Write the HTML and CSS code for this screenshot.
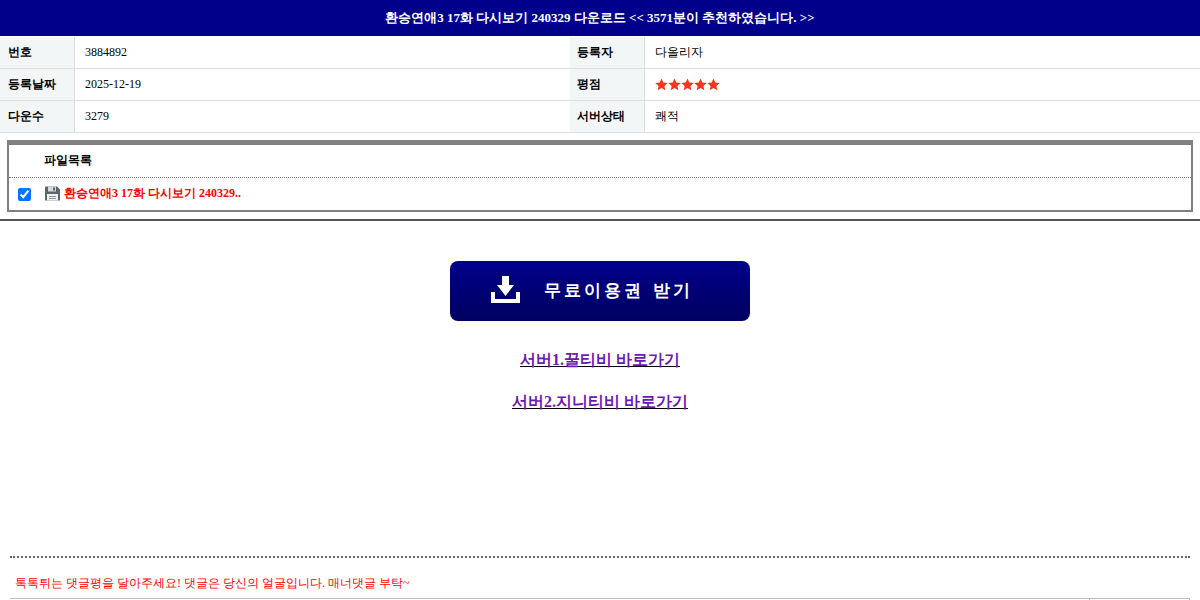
FILE: index.html
```html
<!DOCTYPE html>
<html>
<head>
    <meta charset="UTF-8">
    <meta name="viewport" content="width=device-width, initial-scale=1.0">
    <title>환승연애3 17화 다시보기 240329 다운로드</title>
    <link rel="stylesheet" href="styles.css">
</head>
<body>
    <div class="title-bar">환승연애3 17화 다시보기 240329 다운로드 &lt;&lt; 3571분이 추천하였습니다. &gt;&gt;</div>

    <table class="info-table">
        <tr>
            <th>번호</th>
            <td>3884892</td>
            <th>등록자</th>
            <td>다올리자</td>
        </tr>
        <tr>
            <th>등록날짜</th>
            <td>2025-12-19</td>
            <th>평점</th>
            <td>
                <div class="stars">
                    <svg viewBox="0 0 13 13"><path d="M6.5 0.5L8.3 4.5L12.7 5L9.4 7.9L10.3 12.3L6.5 10L2.7 12.3L3.6 7.9L0.3 5L4.7 4.5Z"/></svg>
                    <svg viewBox="0 0 13 13"><path d="M6.5 0.5L8.3 4.5L12.7 5L9.4 7.9L10.3 12.3L6.5 10L2.7 12.3L3.6 7.9L0.3 5L4.7 4.5Z"/></svg>
                    <svg viewBox="0 0 13 13"><path d="M6.5 0.5L8.3 4.5L12.7 5L9.4 7.9L10.3 12.3L6.5 10L2.7 12.3L3.6 7.9L0.3 5L4.7 4.5Z"/></svg>
                    <svg viewBox="0 0 13 13"><path d="M6.5 0.5L8.3 4.5L12.7 5L9.4 7.9L10.3 12.3L6.5 10L2.7 12.3L3.6 7.9L0.3 5L4.7 4.5Z"/></svg>
                    <svg viewBox="0 0 13 13"><path d="M6.5 0.5L8.3 4.5L12.7 5L9.4 7.9L10.3 12.3L6.5 10L2.7 12.3L3.6 7.9L0.3 5L4.7 4.5Z"/></svg>
                </div>
            </td>
        </tr>
        <tr>
            <th>다운수</th>
            <td>3279</td>
            <th>서버상태</th>
            <td>쾌적</td>
        </tr>
    </table>

    <div class="file-box">
        <div class="file-head">파일목록</div>
        <div class="file-row">
            <input type="checkbox" class="file-check" checked aria-label="파일 선택">
            <svg class="file-icon" viewBox="0 0 15 15">
                <path fill="#59646c" d="M0 1.500Q0 .5 1 .5h11l3 3V14q0 .5-1 .5H1q-1 0-1-.5z"/>
                <path fill="#d5dadd" d="M3 .5h8v5H3z"/>
                <path fill="#59646c" d="M8 1.500h2v3H8z"/>
                <path fill="#eef0f1" d="M2 8h11v6.500H2z"/>
                <path fill="#8a949b" d="M4 10h7v1H4zM4 12h7v1H4z"/>
            </svg>
            <span class="file-name">환승연애3 17화 다시보기 240329..</span>
        </div>
    </div>

    <hr class="divider">

    <div class="download">
        <a href="#" class="free-btn">
            <svg class="free-icon" viewBox="0 0 29 27">
                <path fill="#fff" d="M11 0h7v9h5l-8.500 11L6 9h5z"/>
                <path fill="#fff" d="M0 16h4v7h21v-7h4v11H0z"/>
            </svg>
            <span>무료이용권 받기</span>
        </a>
        <a href="#" class="server-link">서버1.꿀티비 바로가기</a>
        <a href="#" class="server-link">서버2.지니티비 바로가기</a>
    </div>

    <div class="comment-area">
        <p class="comment-note">톡톡튀는 댓글평을 달아주세요! 댓글은 당신의 얼굴입니다. 매너댓글 부탁~</p>
        <div class="comment-head">
            <div class="comment-main"></div>
            <div class="comment-side"></div>
        </div>
    </div>
</body>
</html>
```

FILE: styles.css
```css
html, body {
    height: 100%;
}

body {
    margin: 0;
    height: 600px;
    overflow: hidden;
    background-color: #ffffff;
    color: #000000;
    font-family: "Liberation Serif", serif;
    font-size: 12px;
}

.title-bar {
    height: 36px;
    line-height: 36px;
    background-color: #00008b;
    color: #ffffff;
    font-size: 13px;
    font-weight: bold;
    text-align: center;
}

.info-table {
    width: 100%;
    margin-top: 1px;
    table-layout: fixed;
    border-collapse: collapse;
}

.info-table th,
.info-table td {
    height: 31px;
    padding: 0 0 0 10px;
    border-bottom: 1px solid #dddddd;
    text-align: left;
}

.info-table th {
    width: 65px;
    padding-left: 7px;
    padding-right: 2px;
    background-color: #f3f6f7;
    border-right: 1px solid #dddddd;
    font-size: 12px;
    font-weight: bold;
}

.info-table th:first-child {
    width: 64px;
    padding-left: 8px;
}

.info-table td:nth-child(2) {
    width: 485px;
}

.stars {
    display: flex;
    width: 65px;
}

.stars svg {
    width: 13px;
    height: 13px;
    fill: #f4361c;
    flex: none;
}

.file-box {
    margin: 7px 7px 0;
    border: 2px solid #808080;
    border-top-width: 5px;
}

.file-head {
    height: 32px;
    line-height: 31px;
    padding-left: 35px;
    border-bottom: 1px dotted #777777;
    font-weight: bold;
}

.file-row {
    display: flex;
    align-items: center;
    height: 32px;
    padding-left: 9px;
}

.file-check {
    width: 13px;
    height: 13px;
    margin: 1px 14px 0 0;
}

.file-icon {
    width: 15px;
    height: 15px;
    margin: 0 4px 1px 0;
}

.file-name {
    color: #ff0000;
    font-weight: bold;
    margin-bottom: 2px;
}

.divider {
    height: 2px;
    margin: 7px 0 0;
    border: 0;
    background-color: #555555;
}

.download {
    display: flex;
    flex-direction: column;
    align-items: center;
    height: 337px;
    padding-top: 40px;
    box-sizing: border-box;
    border-bottom: 2px dotted #666666;
    margin: 0 10px;
}

.free-btn {
    display: flex;
    align-items: center;
    justify-content: center;
    gap: 24px;
    width: 300px;
    height: 60px;
    padding-right: 16px;
    box-sizing: border-box;
    margin-bottom: 27px;
    border-radius: 8px;
    background: linear-gradient(#00008b, #000060);
    color: #ffffff;
    font-size: 17px;
    font-weight: bold;
    letter-spacing: 3px;
    word-spacing: 2px;
    text-decoration: none;
}

.free-icon {
    width: 29px;
    height: 27px;
    margin-bottom: 3px;
}

.free-btn span {
    margin-bottom: 2px;
}

.server-link {
    margin-bottom: 18px;
    color: #6a1bb5;
    font-size: 16px;
    font-weight: bold;
    line-height: 24px;
    text-decoration-color: #000000;
}

.comment-area {
    padding: 0 10px;
}

.comment-note {
    margin: 0;
    padding: 17px 0 7px 5px;
    color: #ff0000;
    font-size: 12px;
    line-height: 16px;
}

.comment-head {
    display: flex;
    height: 10px;
    border-top: 1px solid #bbbbbb;
}

.comment-main {
    flex: 1;
    border-right: 1px solid #bbbbbb;
}

.comment-side {
    width: 99px;
    border-right: 1px solid #bbbbbb;
}
```
